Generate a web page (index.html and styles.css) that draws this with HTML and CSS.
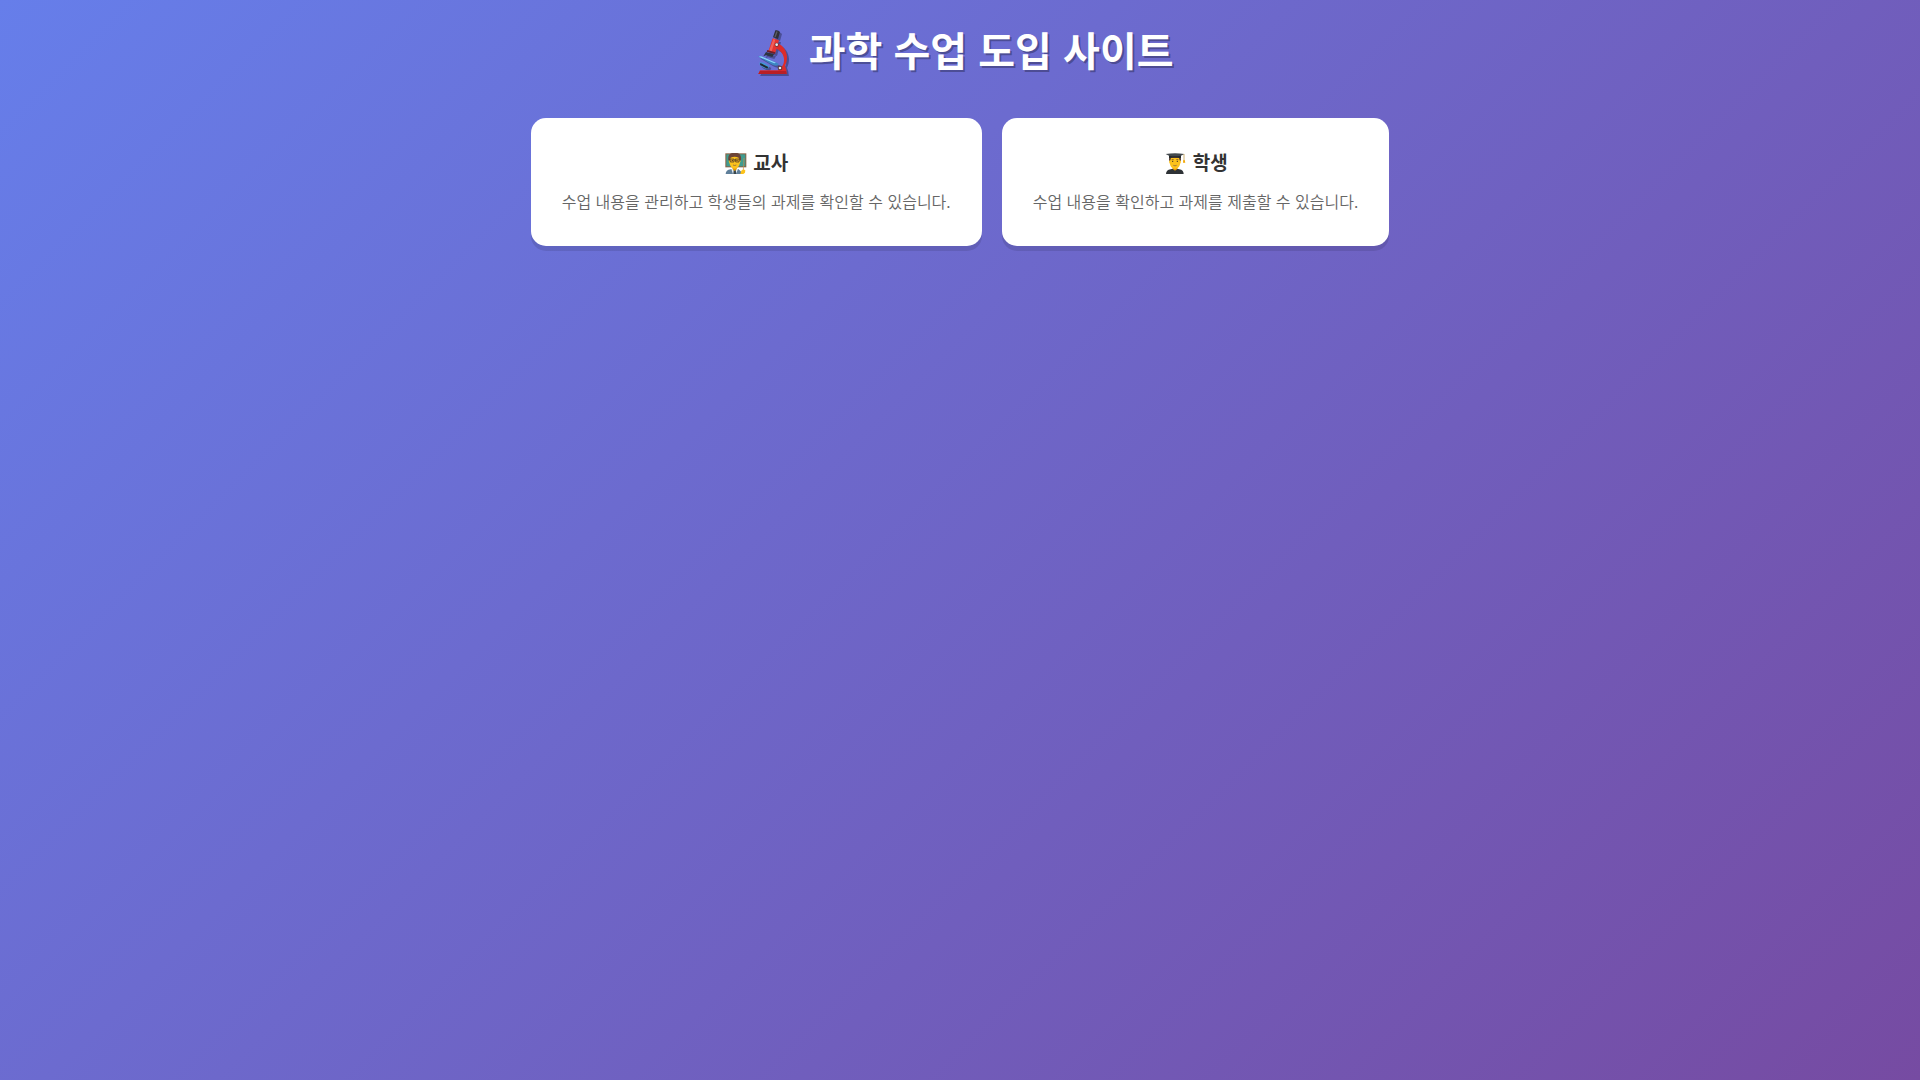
FILE: index.html
```html
<!DOCTYPE html>
<html lang="ko">
<head>
<meta charset="UTF-8">
<meta name="viewport" content="width=device-width, initial-scale=1">
<title>과학 수업 도입 사이트</title>
<link rel="stylesheet" href="styles.css">
</head>
<body>
<div class="container">
  <header class="header">
    <h1 class="title"><svg class="microscope" viewBox="21 18 87 132" aria-hidden="true">
      <path d="M27 139h54l9-8c8-8 11-20 8-32-3-12-11-21-22-25l3-16c17 6 28 22 29 41 0 10-2 19-6 26l4 12 1 13H22z" fill="#dc2b2b"/>
      <path d="M22 150l5-9h78l2 9z" fill="#b91f25"/>
      <path d="M65 43l19 6-12 40-20-7z" fill="#e6332f"/>
      <path d="M67 45l6 2-12 38-7-3z" fill="#f0605a"/>
      <path d="M73 19q9-2 14 5l-6 21-15-5z" fill="#303038"/>
      <path d="M76 22l4 1-6 17-4-1z" fill="#5b5b64"/>
      <path d="M49 78l24 7-2 5-24-7z" fill="#6d2027"/>
      <path d="M45 84l24 7-5 8-19-5-8 3z" fill="#2b3440"/>
      <path d="M21 97l8-1 54 23-2 5q-10 3-20-3z" fill="#3c86c4"/>
      <path d="M23 98l7-1 45 19-5 2z" fill="#8fd6fa"/>
      <path d="M26 115l12 1 17 10-4 8q-10 2-25-11z" fill="#4198d4"/>
      <path d="M28 117l24 12-3 5-22-11z" fill="#202932"/>
      <circle cx="77" cy="62" r="6" fill="#54343a"/><circle cx="77" cy="62" r="4" fill="#ececec"/>
      <circle cx="87" cy="132" r="7" fill="#54343a"/><circle cx="87" cy="132" r="4" fill="#ececec"/>
    </svg> 과학 수업 도입 사이트</h1>
  </header>
  <main class="roles">
    <button type="button" class="role-card">
      <span class="role-name"><svg class="role-icon" viewBox="15 21 70 63" aria-hidden="true">
        <path d="M18 22h63v42H18z" fill="#8a6244"/><path d="M21 25h57v36H21z" fill="#3f9c91"/>
        <path d="M19 84q0-12 15-14l12-3 12 3 14 14z" fill="#5f7f9a"/>
        <path d="M36 69h20l-6 15h-9z" fill="#e8eef2"/><path d="M43 71h6l2 13H42z" fill="#37474f"/>
        <path d="M40 60h12v10l-6 5-6-5z" fill="#e59600"/>
        <path d="M29 42q0-18 17-18t17 18q2 3-1 8-4 18-16 18T30 50q-3-5-1-8z" fill="#fcc21b"/>
        <path d="M27 43q-3-23 19-23t19 23l-4 1-3-9q-12-6-24 0l-3 9z" fill="#6d4437"/>
        <path d="M32 39h12v9H33zM48 39h12l-1 9H49zM44 42h4" fill="#e9a51a" stroke="#3e3027" stroke-width="2"/>
        <circle cx="39" cy="43" r="2" fill="#3e3027"/><circle cx="53" cy="43" r="2" fill="#3e3027"/>
        <path d="M41 57q5 3 10 0" fill="none" stroke="#795548" stroke-width="2"/>
        <path d="M74 36l-2 36" stroke="#c88b4d" stroke-width="2"/>
        <path d="M63 84l3-10 6-4 6 3-1 7-5 4z" fill="#fcc21b"/>
      </svg> 교사</span>
      <span class="role-text">수업 내용을 관리하고 학생들의 과제를 확인할 수 있습니다.</span>
    </button>
    <button type="button" class="role-card">
      <span class="role-name"><svg class="role-icon" viewBox="11 21 70 63" aria-hidden="true">
        <path d="M19 84q0-12 14-14l13-3 13 3q13 2 13 14z" fill="#2e3236"/>
        <path d="M39 60h14v9l-7 5-7-5z" fill="#e59600"/>
        <path d="M29 44q0-18 17-18t17 18q2 3-1 8-4 17-16 17T30 52q-3-5-1-8z" fill="#fcc21b"/>
        <path d="M28 44q-2-17 18-17t18 17l-4-1-2-7H34l-2 7z" fill="#543930"/>
        <path d="M28 26h36v11q-18-6-36 0z" fill="#24292c"/>
        <path d="M18 24q28-5 56 0l-10 5q-18 3-36 0z" fill="#43494d"/>
        <path d="M73 24v19" stroke="#b98b2c" stroke-width="2"/><path d="M71 42h4l2 8h-7z" fill="#f2a600"/>
        <circle cx="39" cy="46" r="2" fill="#3e3027"/><circle cx="53" cy="46" r="2" fill="#3e3027"/>
        <path d="M36 41h6M50 41h6" stroke="#543930" stroke-width="2"/>
        <path d="M41 58q5 3 10 0" fill="none" stroke="#795548" stroke-width="2"/>
      </svg> 학생</span>
      <span class="role-text">수업 내용을 확인하고 과제를 제출할 수 있습니다.</span>
    </button>
  </main>
</div>
</body>
</html>
```
FILE: styles.css
```css
* {
  box-sizing: border-box;
  margin: 0;
  padding: 0;
}

body {
  min-height: 100vh;
  font-family: "Noto Sans CJK KR", "Liberation Sans", sans-serif;
  background: linear-gradient(135deg, #667eea 0%, #764ba2 100%);
}

.container {
  max-width: 1200px;
  margin: 0 auto;
  padding: 20px;
}

.header {
  margin-bottom: 40px;
  text-align: center;
}

.title {
  color: #fff;
  font-size: 40px;
  line-height: 58px;
  text-shadow: 2px 2px 0 rgba(0, 0, 0, 0.3);
}

.microscope {
  width: 29px;
  height: 44px;
  margin: 0 11px;
  vertical-align: -8px;
  filter: drop-shadow(2px 2px 0 rgba(0, 0, 0, 0.3));
}

.roles {
  display: flex;
  flex-wrap: wrap;
  justify-content: center;
  gap: 20px;
}

.role-card {
  padding: 30px 31px;
  border: none;
  border-radius: 15px;
  background: #fff;
  box-shadow: 0 5px 0 rgba(0, 0, 0, 0.1);
  color: #333;
  font-family: inherit;
  text-align: center;
  cursor: pointer;
}

.role-name {
  display: block;
  margin-bottom: 10px;
  font-size: 19px;
  font-weight: 700;
  line-height: 28px;
}

.role-icon {
  width: 24px;
  height: 21px;
  vertical-align: -4px;
}

.role-text {
  display: block;
  color: #666;
  font-size: 16px;
  font-weight: 350;
  line-height: 30px;
}
```
